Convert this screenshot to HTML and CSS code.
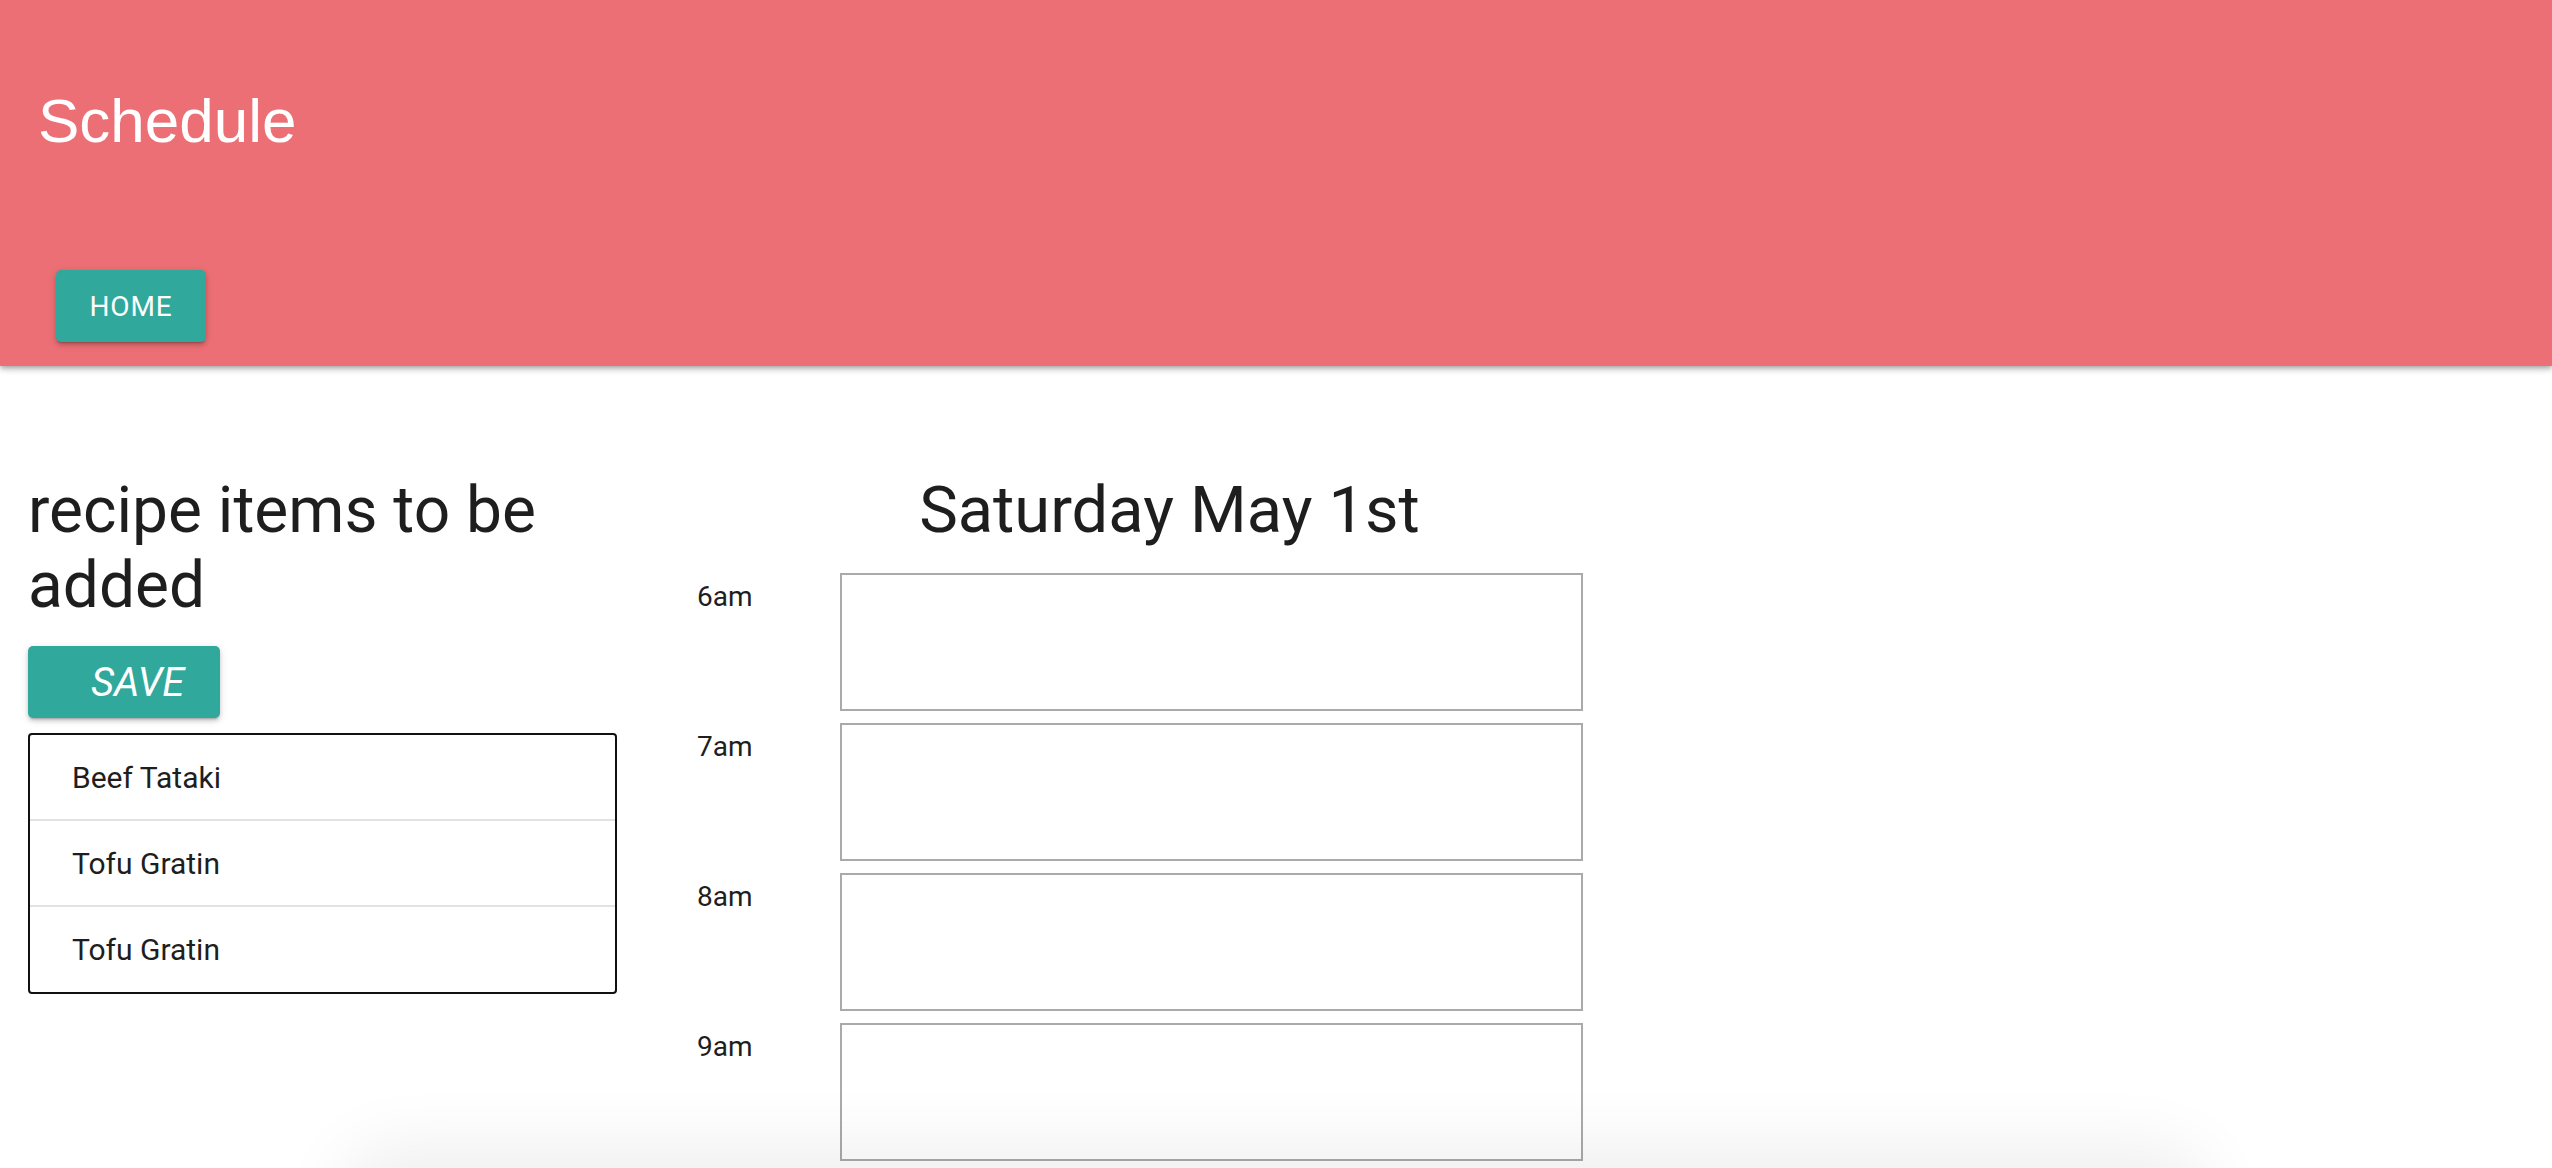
FILE: index.html
```html
<!DOCTYPE html>
<html lang="en">
<head>
<meta charset="utf-8">
<title>Schedule</title>
<link rel="stylesheet" href="styles.css">
</head>
<body>
<header class="appbar">
  <h1 class="app-title">Schedule</h1>
  <nav class="nav">
    <button class="btn btn-home">HOME</button>
  </nav>
</header>
<main class="content">
  <section class="recipes">
    <h2 class="heading">recipe items to be added</h2>
    <button class="btn btn-save">SAVE</button>
    <ul class="recipe-list">
      <li class="recipe-item">Beef Tataki</li>
      <li class="recipe-item">Tofu Gratin</li>
      <li class="recipe-item">Tofu Gratin</li>
    </ul>
  </section>
  <section class="day">
    <h2 class="heading day-heading">Saturday May 1st</h2>
    <div class="slots">
      <div class="slot"><span class="time">6am</span><div class="slot-box"></div></div>
      <div class="slot"><span class="time">7am</span><div class="slot-box"></div></div>
      <div class="slot"><span class="time">8am</span><div class="slot-box"></div></div>
      <div class="slot"><span class="time">9am</span><div class="slot-box"></div></div>
    </div>
  </section>
</main>
<div class="bottom-shade"></div>
</body>
</html>
```

FILE: styles.css
```css
html, body {
  margin: 0;
  padding: 0;
  background: #ffffff;
}
body {
  font-family: Roboto, "Liberation Sans", Arial, sans-serif;
  color: #212121;
  overflow: hidden;
  height: 1168px;
}
.appbar {
  background: #ec6f75;
  padding: 84px 0 24px;
  box-shadow: 0 2px 4px -1px rgba(0,0,0,0.2), 0 4px 5px 0 rgba(0,0,0,0.14), 0 1px 10px 0 rgba(0,0,0,0.12);
  position: relative;
  z-index: 1;
}
.app-title {
  margin: 0 0 0 38px;
  font-family: "Liberation Sans", Arial, sans-serif;
  font-weight: 400;
  font-size: 62px;
  line-height: 74px;
  color: #ffffff;
}
.nav {
  margin-top: 112px;
  padding-left: 56px;
  display: flex;
}
.btn {
  border: 0;
  border-radius: 5px;
  background: #30a89b;
  color: #ffffff;
  font-family: Roboto, "Liberation Sans", Arial, sans-serif;
  cursor: pointer;
  box-shadow: 0 3px 2px -2px rgba(0,0,0,0.2), 0 3px 4px 0 rgba(0,0,0,0.14), 0 2px 8px 0 rgba(0,0,0,0.12);
}
.btn-home {
  width: 150px;
  height: 72px;
  padding: 0;
  font-size: 28px;
  font-weight: 400;
  letter-spacing: 0.9px;
}
.content {
  display: flex;
  padding: 107px 0 0 28px;
}
.recipes {
  width: 589px;
  display: flex;
  flex-direction: column;
  align-items: flex-start;
}
.heading {
  margin: 0;
  font-weight: 400;
  font-size: 64px;
  line-height: 75px;
  color: #1e1e1e;
}
.btn-save {
  margin-top: 23px;
  width: 192px;
  height: 72px;
  padding: 0 32px 0 63px;
  text-align: left;
  font-size: 40px;
  font-style: italic;
  font-weight: 400;
}
.recipe-list {
  list-style: none;
  margin: 15px 0 0;
  padding: 0;
  width: 589px;
  box-sizing: border-box;
  border: 2px solid #111111;
  border-radius: 4px;
}
.recipe-item {
  height: 84px;
  display: flex;
  align-items: center;
  padding-left: 42px;
  font-size: 30px;
  color: #1e1e1e;
  border-bottom: 2px solid #e2e2e2;
}
.recipe-item:last-child {
  border-bottom: 0;
  height: 85px;
}
.day {
  margin-left: 80px;
  width: 945px;
}
.day-heading {
  text-align: center;
  font-size: 65px;
}
.slots {
  margin-top: 25px;
  display: flex;
  flex-direction: column;
  gap: 12px;
}
.slot {
  display: flex;
}
.time {
  width: 143px;
  padding-top: 7px;
  font-size: 28px;
  line-height: 33px;
  color: #1e1e1e;
}
.slot-box {
  width: 743px;
  height: 138px;
  box-sizing: border-box;
  border: 2px solid #aaaaaa;
  background: #ffffff;
}
.bottom-shade {
  position: fixed;
  left: 360px;
  width: 1830px;
  bottom: -70px;
  height: 70px;
  border-radius: 40px;
  box-shadow: 0 0 70px 20px rgba(0,0,0,0.07);
  pointer-events: none;
}
```
